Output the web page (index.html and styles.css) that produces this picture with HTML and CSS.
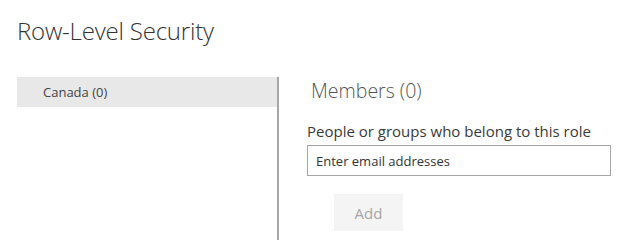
FILE: index.html
```html
<!DOCTYPE html>
<html lang="en">
<head>
  <meta charset="UTF-8">
  <title>Row-Level Security</title>
  <link rel="stylesheet" href="styles.css">
</head>
<body>

  <h1 class="title">Row-Level Security</h1>

  <div class="layout">
    <div class="roles">
      <div class="role selected">Canada (0)</div>
    </div>

    <div class="members">
      <h2>Members (0)</h2>
      <label for="emails">People or groups who belong to this role</label>
      <input id="emails" type="text" placeholder="Enter email addresses">
      <button class="add-btn" disabled>Add</button>
    </div>
  </div>

</body>
</html>
```

FILE: styles.css
```css
body {
  margin: 0;
  font-family: 'Open Sans', 'Noto Sans', sans-serif;
  background-color: #ffffff;
  color: #333333;
  height: 240px;
  overflow: hidden;
}

.title {
  margin: 0;
  padding: 14px 0 0 17px;
  height: 77px;
  box-sizing: border-box;
  font-size: 24px;
  font-weight: 300;
  color: #333333;
  letter-spacing: -0.2px;
}

.layout {
  display: flex;
  height: 163px;
}

.roles {
  width: 260px;
  margin-left: 17px;
  border-right: 2px solid #a6a6a6;
}

.role {
  height: 30px;
  line-height: 30px;
  padding-left: 26px;
  font-size: 13px;
  color: #444444;
}

.role.selected {
  background-color: #e8e8e8;
}

.members {
  display: flex;
  flex-direction: column;
  align-items: flex-start;
  padding-left: 28px;
}

.members h2 {
  margin: 0;
  padding: 0 0 0 4px;
  height: 44px;
  font-size: 19.5px;
  font-weight: 300;
  color: #555555;
}

.members label {
  font-size: 15px;
  line-height: 20px;
  color: #3a3a3a;
  margin-bottom: 4px;
}

.members input {
  width: 304px;
  height: 31px;
  box-sizing: border-box;
  border: 1px solid #a6a6a6;
  padding: 0 8px;
  font-family: inherit;
  font-size: 13px;
  color: #333333;
  outline: none;
}

.members input::placeholder {
  color: #333333;
}

.add-btn {
  margin: 18px 0 0 27px;
  width: 69px;
  height: 37px;
  border: none;
  background-color: #f4f4f4;
  color: #a6a6a6;
  font-family: inherit;
  font-size: 15px;
}
```
